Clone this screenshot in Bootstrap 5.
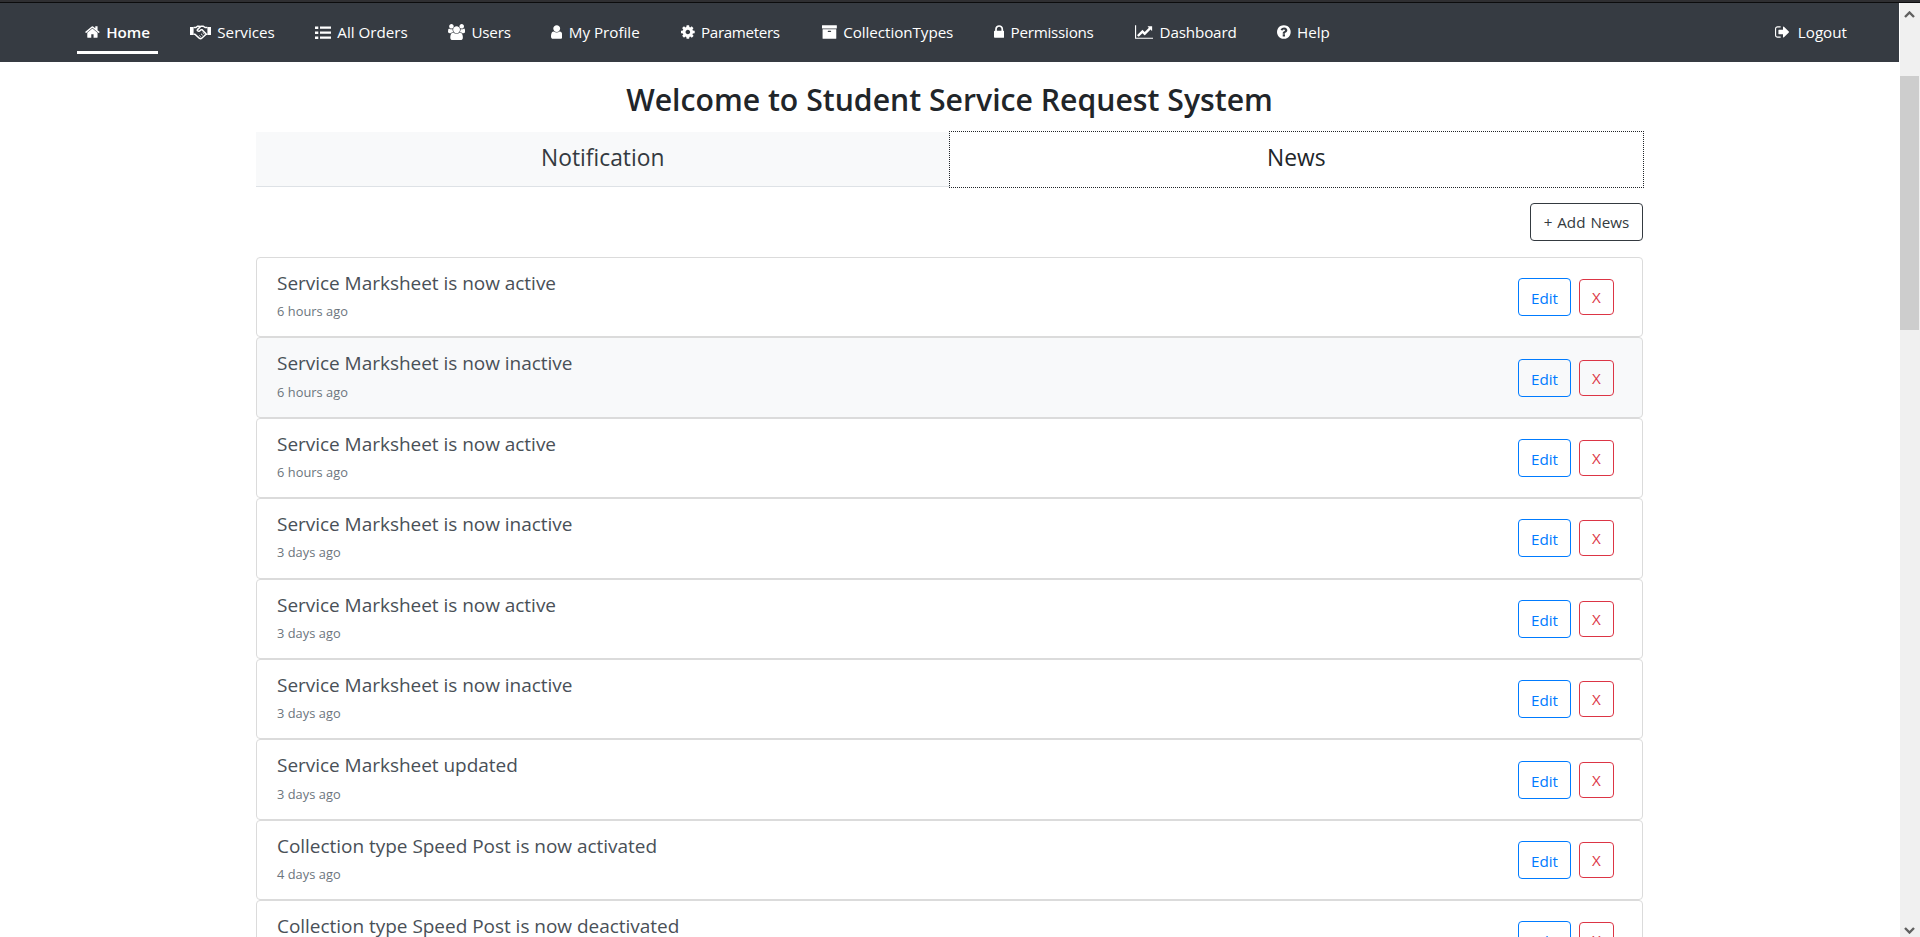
<!DOCTYPE html>
<html lang="en">
<head>
<meta charset="utf-8">
<title>Student Service Request System</title>
<link href="https://cdn.jsdelivr.net/npm/bootstrap@5.3.0/dist/css/bootstrap.min.css" rel="stylesheet">
<style>
  body { font-family: "Open Sans", "Noto Sans", sans-serif; font-size: 15.2px; color: #212529; height: 937px; overflow: hidden; background: #fff; }
  .window-edge { height: 3px; background: #2f2f32; border-bottom: 1px solid #0c0c0d; }
  .viewport { height: 934px; }
  .page { width: 1899px; overflow: hidden; }
  .topbar { height: 59px; background: #363b42; padding: 0 44px 0 77px; }
  .topbar .nav { gap: 24px; }
  .topbar .nav-link { color: #fff; padding: 7px 8px 0; height: 48px; line-height: 24px; border-bottom: 3px solid transparent; display: flex; align-items: center; gap: 6.3px; white-space: nowrap; margin-top: 3px; }
  .topbar .nav-link.active { font-weight: 600; border-color: #fff; }
  .topbar .nav-link.nav-logout { gap: 7.5px; }
  .topbar svg { height: 16px; fill: currentColor; flex: none; }
  .nav-home { width: 81px; }
  .nav-services { width: 101px; }
  .nav-orders { width: 109px; }
  .nav-users { width: 79px; letter-spacing: -.2px; }
  .nav-profile { width: 106px; }
  .nav-parameters { width: 117px; letter-spacing: -.35px; }
  .nav-collections { width: 148px; letter-spacing: -.05px; }
  .nav-permissions { width: 117px; letter-spacing: -.25px; }
  .nav-dashboard { width: 118px; letter-spacing: -.15px; }
  .main-col { width: 1387px; margin-left: 256px; }
  .page-title { font-size: 30.2px; font-weight: 600; line-height: 38px; padding-top: 19px; margin-bottom: 13px; }
  .tab-strip { height: 55px; margin-bottom: 16px; }
  .tab-item { flex: 1; font-size: 22.8px; line-height: 36px; padding-top: 8px; text-align: center; background: #f8f9fa; border-bottom: 1px solid #dee2e6; color: #343a40; text-decoration: none; }
  .tab-item.current { background: #fff; color: #212529; border: 0; outline: 1px dotted #212529; }
  .btn { font-size: 15.2px; line-height: 24px; padding: 6px 0; border-radius: 4px; height: 38px; }
  .btn-add { width: 113px; color: #343a40; border-color: #343a40; word-spacing: 1px; }
  .btn-edit { width: 53px; padding-top: 7px; padding-bottom: 5px; color: #007bff; border-color: #007bff; }
  .btn-remove { width: 35px; height: 36px; padding: 5px 0; color: #dc3545; border-color: #dc3545; }
  .news-item { height: 80.4px; border: 1px solid #dbdbdb; border-radius: 4px; padding: 0 28px 0 20px; }
  .news-item.hovered { background: #f8f9fa; }
  .news-title { font-size: 19px; line-height: 24px; color: #495057; margin-top: 13px; letter-spacing: -.03px; }
  .news-time { font-size: 12.8px; line-height: 20px; color: #6c757d; margin-top: 6.3px; letter-spacing: .05px; }
  .scroller { width: 20px; background: #f0f0f0; margin-left: 1px; padding-right: 1px; }
  .scroller .thumb { height: 254px; background: #cdcdcd; margin: 51px 0 auto; }
  .scroller svg { width: 11px; height: 7px; fill: none; stroke: #606060; stroke-width: 2.4; margin: 8px 0 7px 4px; display: block; }
  .scroller svg:last-child { margin: 0 0 3px 4px; }
</style>
</head>
<body>
<div class="window-edge"></div>
<div class="viewport d-flex">
  <div class="page flex-shrink-0">
    <nav class="topbar d-flex justify-content-between">
      <div class="nav flex-nowrap">
        <a class="nav-link nav-home active" href="#"><svg viewBox="64 0 1664 1792"><path d="M1472 992v480q0 26-19 45t-45 19h-384v-384h-256v384h-384q-26 0-45-19t-19-45v-480q0-1 .5-3t.5-3l575-474 575 474q1 2 1 6zm223-69l-62 74q-8 9-21 11h-3q-13 0-21-7l-692-577-692 577q-12 8-24 7-13-2-21-11l-62-74q-8-10-7-23.5t11-21.5l719-599q32-26 76-26t76 26l244 204v-195q0-14 9-23t23-9h192q14 0 23 9t9 23v408l219 182q10 8 11 21.5t-7 23.5z"/></svg>Home</a>
        <a class="nav-link nav-services" href="#"><svg viewBox="0 0 21 16"><path d="M0 3h3.600v8H0zM17.400 3H21v8h-3.600z"/><path d="M3.600 3.600h2.200L7.600 2.200h2.200M3.600 10.300h1.300l4.300 3.800c1 .8 2 .6 2.800-.1l4.100-3.700h1.300M17.400 3.600h-2.200l-2-1.400h-2.300L7.500 5.600c-.7 1 .8 2.300 2.200 1.300l1.500-1.200h.9l3.900 4" fill="none" stroke="currentColor" stroke-width="1.500"/><path d="M9.300 11.500l1.400 1.200M11 9.800l1.700 1.500M12.600 8.300l1.700 1.600" fill="none" stroke="currentColor" stroke-width=".9"/></svg>Services</a>
        <a class="nav-link nav-orders" href="#"><svg viewBox="0 0 16 16"><path d="M0 2.400h3.300v2.500H0zM0 7.400h3.300v2.500H0zM0 12.400h3.300v2.500H0zM5 2.500h11v2.200H5zM5 7.500h11v2.200H5zM5 12.500h11v2.200H5z"/></svg>All Orders</a>
        <a class="nav-link nav-users" href="#"><svg viewBox="0 0 1920 1792"><path d="M593 896q-162 5-265 128h-134q-82 0-138-40.500t-56-118.500q0-353 124-353 6 0 43.500 21t97.500 42.500 119 21.500q67 0 133-23-5 37-5 66 0 139 81 256zm1071 637q0 120-73 189.500t-194 69.500h-874q-121 0-194-69.500t-73-189.500q0-53 3.500-103.500t14-109 26.500-108.500 43-97.500 62-81 85.500-53.500 111.500-20q10 0 43 21.500t73 48 107 48 135 21.500 135-21.500 107-48 73-48 43-21.500q61 0 111.500 20t85.500 53.500 62 81 43 97.500 26.500 108.500 14 109 3.500 103.500zm-1024-1277q0 106-75 181t-181 75-181-75-75-181 75-181 181-75 181 75 75 181zm704 384q0 159-112.500 271.500t-271.500 112.500-271.500-112.500-112.500-271.500 112.500-271.500 271.500-112.500 271.500 112.500 112.500 271.500zm576 225q0 78-56 118.500t-138 40.500h-134q-103-123-265-128 81-117 81-256 0-29-5-66 66 23 133 23 59 0 119-21.500t97.500-42.500 43.500-21q124 0 124 353zm-128-609q0 106-75 181t-181 75-181-75-75-181 75-181 181-75 181 75 75 181z"/></svg>Users</a>
        <a class="nav-link nav-profile" href="#"><svg viewBox="256 0 1280 1792"><path d="M1536 1399q0 109-62.500 187t-150.500 78h-854q-88 0-150.500-78t-62.500-187q0-85 8.500-160.500t31.500-152 58.500-131 94-89 134.500-34.500q131 128 313 128t313-128q76 0 134.500 34.500t94 89 58.500 131 31.500 152 8.500 160.500zm-256-887q0 159-112.500 271.500t-271.500 112.500-271.500-112.500-112.500-271.500 112.500-271.500 271.500-112.500 271.500 112.500 112.500 271.500z"/></svg>My Profile</a>
        <a class="nav-link nav-parameters" href="#"><svg viewBox="128 0 1536 1792"><path d="M1152 896q0-106-75-181t-181-75-181 75-75 181 75 181 181 75 181-75 75-181zm512-109v222q0 12-8 23t-20 13l-185 28q-19 54-39 91 35 50 107 138 10 12 10 25t-9 23q-27 37-99 108t-94 71q-12 0-26-9l-138-108q-44 23-91 38-16 136-29 186-7 28-36 28h-222q-14 0-24.500-8.500t-11.500-21.500l-28-184q-49-16-90-37l-141 107q-10 9-25 9-14 0-25-11-126-114-165-168-7-10-7-23 0-12 8-23 15-21 51-66.500t54-70.500q-27-50-41-99l-183-27q-13-2-21-12.500t-8-23.500v-222q0-12 8-23t19-13l186-28q14-46 39-92-40-57-107-138-10-12-10-24 0-10 9-23 26-36 98.500-107.500t94.500-71.500q13 0 26 10l138 107q44-23 91-38 16-136 29-186 7-28 36-28h222q14 0 24.500 8.500t11.500 21.500l28 184q49 16 90 37l142-107q9-9 24-9 13 0 25 10 129 119 165 170 7 8 7 22 0 12-8 23-15 21-51 66.500t-54 70.500q26 50 41 98l183 28q13 2 21 12.500t8 23.500z"/></svg>Parameters</a>
        <a class="nav-link nav-collections" href="#"><svg viewBox="64 0 1664 1792"><path d="M1088 832q0-26-19-45t-45-19h-256q-26 0-45 19t-19 45 19 45 45 19h256q26 0 45-19t19-45zm576-192v960q0 26-19 45t-45 19h-1408q-26 0-45-19t-19-45v-960q0-26 19-45t45-19h1408q26 0 45 19t19 45zm64-448v256q0 26-19 45t-45 19h-1536q-26 0-45-19t-19-45v-256q0-26 19-45t45-19h1536q26 0 45 19t19 45z"/></svg>CollectionTypes</a>
        <a class="nav-link nav-permissions" href="#"><svg viewBox="320 0 1152 1792"><path d="M640 768h512v-192q0-106-75-181t-181-75-181 75-75 181v192zm832 96v576q0 40-28 68t-68 28h-960q-40 0-68-28t-28-68v-576q0-40 28-68t68-28h32v-192q0-184 132-316t316-132 316 132 132 316v192h32q40 0 68 28t28 68z"/></svg>Permissions</a>
        <a class="nav-link nav-dashboard" href="#"><svg viewBox="0 0 2048 1792"><path d="M2048 1536v128h-2048v-1536h128v1408h1920zm-128-1248v435q0 21-19.500 29.500t-35.500-7.500l-121-121-633 633q-10 10-23 10t-23-10l-233-233-416 416-192-192 585-585q10-10 23-10t23 10l233 233 464-464-121-121q-16-16-7.500-35.500t29.500-19.500h435q14 0 23 9t9 23z"/></svg>Dashboard</a>
        <a class="nav-link" href="#"><svg viewBox="128 0 1536 1792"><path d="M1024 1376v-192q0-14-9-23t-23-9h-192q-14 0-23 9t-9 23v192q0 14 9 23t23 9h192q14 0 23-9t9-23zm256-672q0-88-55.500-163t-138.500-116-170-41q-243 0-371 213-15 24 8 42l132 100q7 6 19 6 16 0 25-12 53-68 86-92 34-24 86-24 48 0 85.500 26t37.500 59q0 38-20 61t-68 45q-63 28-115.500 86.500t-52.500 125.500v36q0 14 9 23t23 9h192q14 0 23-9t9-23q0-19 21.500-49.500t54.500-49.500q32-18 49-28.500t46-35 44.500-48 28-60.500 12.500-81zm384 192q0 209-103 385.500t-279.500 279.500-385.500 103-385.500-103-279.500-279.500-103-385.500 103-385.500 279.500-279.500 385.500-103 385.500 103 279.500 279.500 103 385.500z"/></svg>Help</a>
      </div>
      <div class="nav">
        <a class="nav-link nav-logout" href="#"><svg viewBox="64 0 1664 1792"><path d="M704 1440q0 4 1 20t.5 26.500-3 23.500-10 19.500-20.500 6.500h-320q-119 0-203.500-84.500t-84.500-203.500v-704q0-119 84.500-203.500t203.500-84.500h320q13 0 22.500 9.500t9.500 22.500q0 4 1 20t.5 26.500-3 23.500-10 19.500-20.500 6.500h-320q-66 0-113 47t-47 113v704q0 66 47 113t113 47h312l11.500 1 11.500 3 8 5.500 7 9 2 13.500zm928-544q0 26-19 45l-544 544q-19 19-45 19t-45-19-19-45v-288h-448q-26 0-45-19t-19-45v-384q0-26 19-45t45-19h448v-288q0-26 19-45t45-19 45 19l544 544q19 19 19 45z"/></svg>Logout</a>
      </div>
    </nav>
    <main class="main-col">
      <h2 class="page-title text-center">Welcome to Student Service Request System</h2>
      <div class="tab-strip d-flex">
        <a class="tab-item" href="#">Notification</a>
        <a class="tab-item current" href="#">News</a>
      </div>
      <div class="d-flex justify-content-end mb-3">
        <button class="btn btn-outline-dark btn-add">+ Add News</button>
      </div>
      <div id="news-list"></div>
    </main>
  </div>
  <div class="scroller d-flex flex-column flex-shrink-0">
    <svg viewBox="0 0 11 7"><path d="M1 6l4.500-4.500L10 6"/></svg>
    <div class="thumb"></div>
    <svg viewBox="0 0 11 7"><path d="M1 1l4.500 4.500L10 1"/></svg>
  </div>
</div>
<script>
  const news = [
    ['Service Marksheet is now active', '6 hours ago'],
    ['Service Marksheet is now inactive', '6 hours ago'],
    ['Service Marksheet is now active', '6 hours ago'],
    ['Service Marksheet is now inactive', '3 days ago'],
    ['Service Marksheet is now active', '3 days ago'],
    ['Service Marksheet is now inactive', '3 days ago'],
    ['Service Marksheet updated', '3 days ago'],
    ['Collection type Speed Post is now activated', '4 days ago'],
    ['Collection type Speed Post is now deactivated', '4 days ago']
  ];
  document.getElementById('news-list').innerHTML = news.map(([title, time], i) => `
    <div class="news-item d-flex justify-content-between${i === 1 ? ' hovered' : ''}">
      <div><div class="news-title">${title}</div><div class="news-time">${time}</div></div>
      <div class="d-flex align-items-center gap-2">
        <button class="btn btn-outline-primary btn-edit">Edit</button>
        <button class="btn btn-outline-danger btn-remove">X</button>
      </div>
    </div>`).join('');
</script>
<script src="https://cdn.jsdelivr.net/npm/bootstrap@5.3.0/dist/js/bootstrap.bundle.min.js"></script>
</body>
</html>
